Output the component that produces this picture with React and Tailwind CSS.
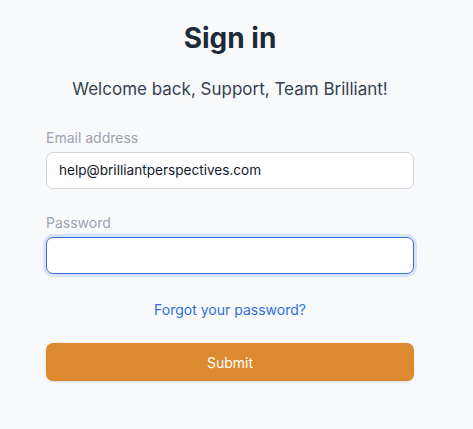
export default function App() {
  return (
    <div className="min-h-[429px] w-full bg-[#f8f9fb] font-['Inter',sans-serif]">
      <div className="ml-[46px] w-[368px] pt-[20px] flex flex-col">
        <h1 className="text-center text-[28px] font-bold leading-[36px] text-[#1f2937]">Sign in</h1>
        <p className="mt-[21px] text-center text-[17px] leading-[24px] text-[#374151]">Welcome back, Support, Team Brilliant!</p>
        <label className="mt-[27px] text-[14px] leading-[20px] text-[#9ca3af]">Email address</label>
        <div className="mt-[4px] h-[37px] rounded-[7px] border border-[#d1d5db] bg-white px-[12px] flex items-center text-[13.6px] text-[#111827]">
          help@brilliantperspectives.com
        </div>
        <label className="mt-[24px] text-[14px] leading-[20px] text-[#9ca3af]">Password</label>
        <div className="mt-[4px] h-[37px] rounded-[7px] border border-[#2f6fd6] bg-white shadow-[0_0_0_3px_rgba(59,130,246,0.18)]"></div>
        <div className="mt-[26px] text-center text-[14px] leading-[20px] text-[#2f6fe0]">Forgot your password?</div>
        <button className="mt-[23px] h-[38px] rounded-[7px] bg-[#db8a2f] text-[14px] text-white shadow-sm">Submit</button>
      </div>
    </div>
  );
}
